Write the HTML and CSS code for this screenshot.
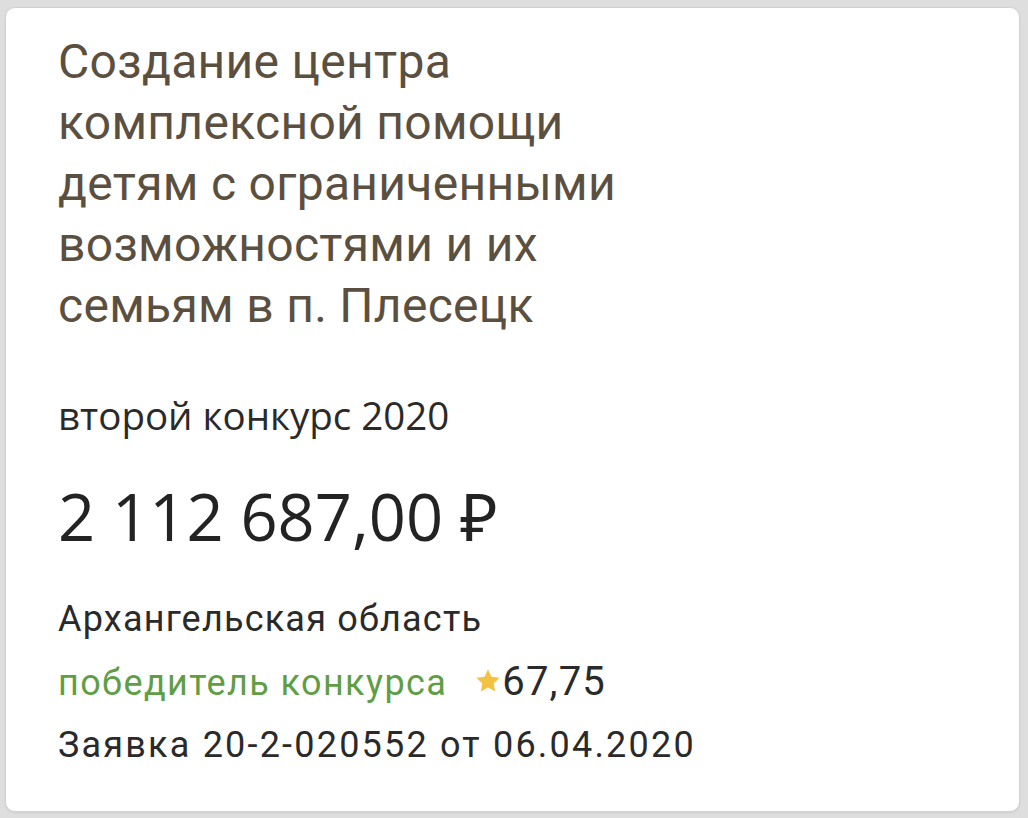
FILE: index.html
```html
<!DOCTYPE html>
<html lang="ru">
<head>
<meta charset="utf-8">
<title>Заявка</title>
<link rel="stylesheet" href="styles.css">
</head>
<body>
<div class="card">
  <div class="title">Создание центра<br>комплексной помощи<br>детям с ограниченными<br>возможностями и их<br>семьям в п. Плесецк</div>
  <div class="contest">второй конкурс 2020</div>
  <div class="amount">2 112 687,00 ₽</div>
  <div class="line region">Архангельская область</div>
  <div class="line status">
    <span class="winner">победитель конкурса</span>
    <span class="score"><svg class="star" viewBox="0 0 24 24" width="26" height="26"><path d="M12 1.2l3.2 6.9 7.5.9-5.5 5.2 1.5 7.4L12 18l-6.7 3.6 1.5-7.4-5.5-5.2 7.5-.9z" fill="#f4c243"/></svg>67,75</span>
  </div>
  <div class="line app">Заявка 20-2-020552 от 06.04.2020</div>
</div>
</body>
</html>
```
FILE: styles.css
```css
html, body {
  margin: 0;
  padding: 0;
}
body {
  background: #dedede;
  width: 1028px;
  height: 818px;
  box-sizing: border-box;
  padding: 7px 8px 6px 5px;
}
.card {
  box-sizing: border-box;
  height: 805px;
  background: #ffffff;
  border: 1px solid #d2d2d2;
  border-radius: 10px;
  padding: 23px 40px 0 52px;
  box-shadow: 0 1px 2px rgba(0,0,0,0.08);
}
.title {
  font-family: Roboto, "Noto Sans", sans-serif;
  font-size: 48px;
  line-height: 61px;
  color: #5b5040;
  letter-spacing: 0.3px;
}
.contest {
  margin-top: 54px;
  font-family: "Open Sans", "Noto Sans", sans-serif;
  font-size: 38.5px;
  line-height: 50px;
  color: #2a2a2a;
}
.amount {
  margin-top: 36px;
  font-family: "Open Sans", "Noto Sans", sans-serif;
  font-size: 65px;
  line-height: 80px;
  color: #232323;
}
.line {
  font-family: Roboto, "Noto Sans", sans-serif;
  font-size: 36px;
  line-height: 62.5px;
  color: #2a2a2a;
}
.region {
  margin-top: 32px;
  letter-spacing: 1.2px;
}
.status {
  display: flex;
  align-items: baseline;
  gap: 28px;
}
.winner {
  color: #5f9e45;
  letter-spacing: 1.4px;
}
.score {
  display: inline-flex;
  align-items: baseline;
  gap: 1px;
  font-size: 40px;
  letter-spacing: 1.2px;
}
.star {
  align-self: center;
  margin-top: -2px;
}
.app {
  letter-spacing: 2.2px;
}
```
